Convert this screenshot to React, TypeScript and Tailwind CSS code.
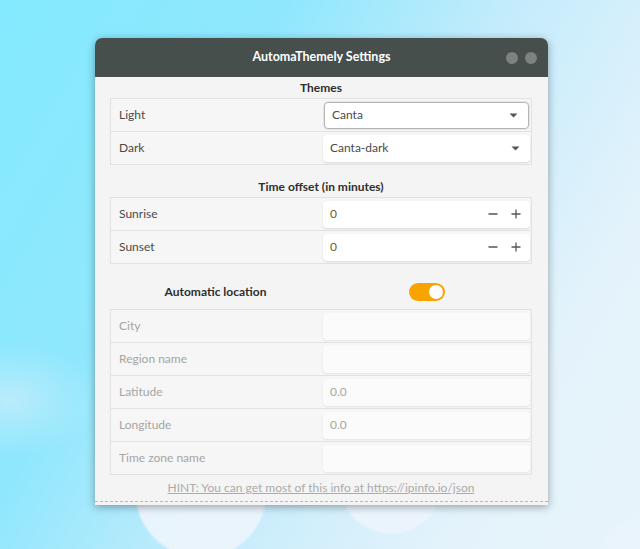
import React from "react";

const font = { fontFamily: 'Lato, "Noto Sans", sans-serif' };

function Arrow() {
  return (
    <svg width="9" height="5" viewBox="0 0 9 5" className="mr-[10px]">
      <path d="M0.5 0.5 L8.5 0.5 L4.5 4.5 Z" fill="#555" />
    </svg>
  );
}

function Combo({ value, focused }: { value: string; focused?: boolean }) {
  return (
    <div
      className={
        "h-[27px] rounded-[4px] bg-white flex items-center justify-between pl-[7px] text-[#4a4a4a] " +
        (focused
          ? "w-[205px] mr-[2px] border border-[#b5b5b5] shadow-[0_0_0_1px_#e6e6e6]"
          : "w-[207px] mr-[1px] shadow-[0_1px_2px_rgba(0,0,0,0.12)]")
      }
    >
      <span>{value}</span>
      <Arrow />
    </div>
  );
}

function Spin() {
  return (
    <div className="w-[207px] h-[27px] mr-[1px] rounded-[4px] bg-white flex items-center justify-between pl-[7px] shadow-[0_1px_2px_rgba(0,0,0,0.12)]">
      <span className="text-[#6e5a35]">0</span>
      <div className="flex items-center gap-[13px] pr-[9px]">
        <svg width="10" height="10" viewBox="0 0 10 10">
          <path d="M0.5 5 H9.5" stroke="#555" strokeWidth="1.3" />
        </svg>
        <svg width="10" height="10" viewBox="0 0 10 10">
          <path d="M0.5 5 H9.5 M5 0.5 V9.5" stroke="#555" strokeWidth="1.3" />
        </svg>
      </div>
    </div>
  );
}

function Entry({ value }: { value?: string }) {
  return (
    <div className="w-[207px] h-[27px] mr-[1px] rounded-[4px] bg-[#fbfbfb] flex items-center pl-[7px] text-[#a6a6a6] shadow-[0_1px_2px_rgba(0,0,0,0.08)]">
      {value}
    </div>
  );
}

function Row({
  label,
  children,
  disabled,
}: {
  label: string;
  children: React.ReactNode;
  disabled?: boolean;
}) {
  return (
    <div className="box-content h-[32px] flex items-center bg-[#f6f6f6]">
      <div
        className={
          "flex-1 pl-[8px] " + (disabled ? "text-[#a5a5a5]" : "text-[#4a4a4a]")
        }
      >
        {label}
      </div>
      {children}
    </div>
  );
}

function Heading({ children }: { children: React.ReactNode }) {
  return (
    <div className="h-[21px] flex items-center justify-center font-bold text-[#2e2e2e]">
      {children}
    </div>
  );
}

export default function App() {
  return (
    <div
      className="w-[640px] h-[549px] overflow-hidden pt-[38px] pl-[95px] bg-[radial-gradient(circle_at_201px_492px,rgba(238,245,253,0.9)_0,rgba(238,245,253,0.9)_64px,rgba(238,245,253,0)_67px),radial-gradient(circle_at_391px_482px,rgba(238,245,253,0.85)_0,rgba(238,245,253,0.85)_50px,rgba(238,245,253,0)_53px),radial-gradient(circle_at_640px_560px,rgba(235,244,252,0.6)_0,rgba(235,244,252,0.6)_40px,rgba(235,244,252,0)_43px),radial-gradient(ellipse_at_10px_400px,rgba(215,238,250,0.6)_0,rgba(215,238,250,0)_90px),linear-gradient(120deg,#84eaff_0%,#8fe7fd_30%,#c6ecfb_55%,#e4f3fb_80%,#e8f3fa_100%)]"
      style={font}
    >
      <div className="w-[453px] rounded-t-[7px] overflow-hidden bg-[#f4f4f4] shadow-[0_2px_8px_rgba(0,0,0,0.35)] text-[12px]">
        <div className="h-[39px] bg-[#474f4d] flex items-center relative">
          <div className="flex-1 text-center text-white font-bold text-[12.5px]">
            AutomaThemely Settings
          </div>
          <div className="absolute right-[11px] top-[14px] flex gap-[7px]">
            <div className="w-[12px] h-[12px] rounded-full bg-[#7c8281]" />
            <div className="w-[12px] h-[12px] rounded-full bg-[#7c8281]" />
          </div>
        </div>
        <div className="px-[15px] pr-[16px]">
          <Heading>Themes</Heading>
          <div className="border border-[#e2e2e2] divide-y divide-[#e2e2e2]">
            <Row label="Light">
              <Combo value="Canta" focused />
            </Row>
            <Row label="Dark">
              <Combo value="Canta-dark" />
            </Row>
          </div>
          <div className="mt-[11px]">
            <Heading>Time offset (in minutes)</Heading>
          </div>
          <div className="border border-[#e2e2e2] divide-y divide-[#e2e2e2]">
            <Row label="Sunrise">
              <Spin />
            </Row>
            <Row label="Sunset">
              <Spin />
            </Row>
          </div>
          <div className="mt-[13px] mb-[2px] h-[30px] grid grid-cols-2 items-center">
            <div className="text-center font-bold text-[#2e2e2e]">
              Automatic location
            </div>
            <div className="flex justify-center">
              <div className="w-[36px] h-[18px] rounded-full bg-[#f9a300] flex items-center justify-end pr-[2px]">
                <div className="w-[14px] h-[14px] rounded-full bg-white" />
              </div>
            </div>
          </div>
          <div className="border border-[#e2e2e2] divide-y divide-[#e2e2e2]">
            <Row label="City" disabled>
              <Entry />
            </Row>
            <Row label="Region name" disabled>
              <Entry />
            </Row>
            <Row label="Latitude" disabled>
              <Entry value="0.0" />
            </Row>
            <Row label="Longitude" disabled>
              <Entry value="0.0" />
            </Row>
            <Row label="Time zone name" disabled>
              <Entry />
            </Row>
          </div>
          <div className="h-[26px] flex items-center justify-center">
            <span className="underline text-[#ababab] text-[12px]">
              HINT: You can get most of this info at https://ipinfo.io/json
            </span>
          </div>
        </div>
        <div className="border-b border-dashed border-[#b8b8b8]" />
        <div className="h-[3px]" />
      </div>
    </div>
  );
}
